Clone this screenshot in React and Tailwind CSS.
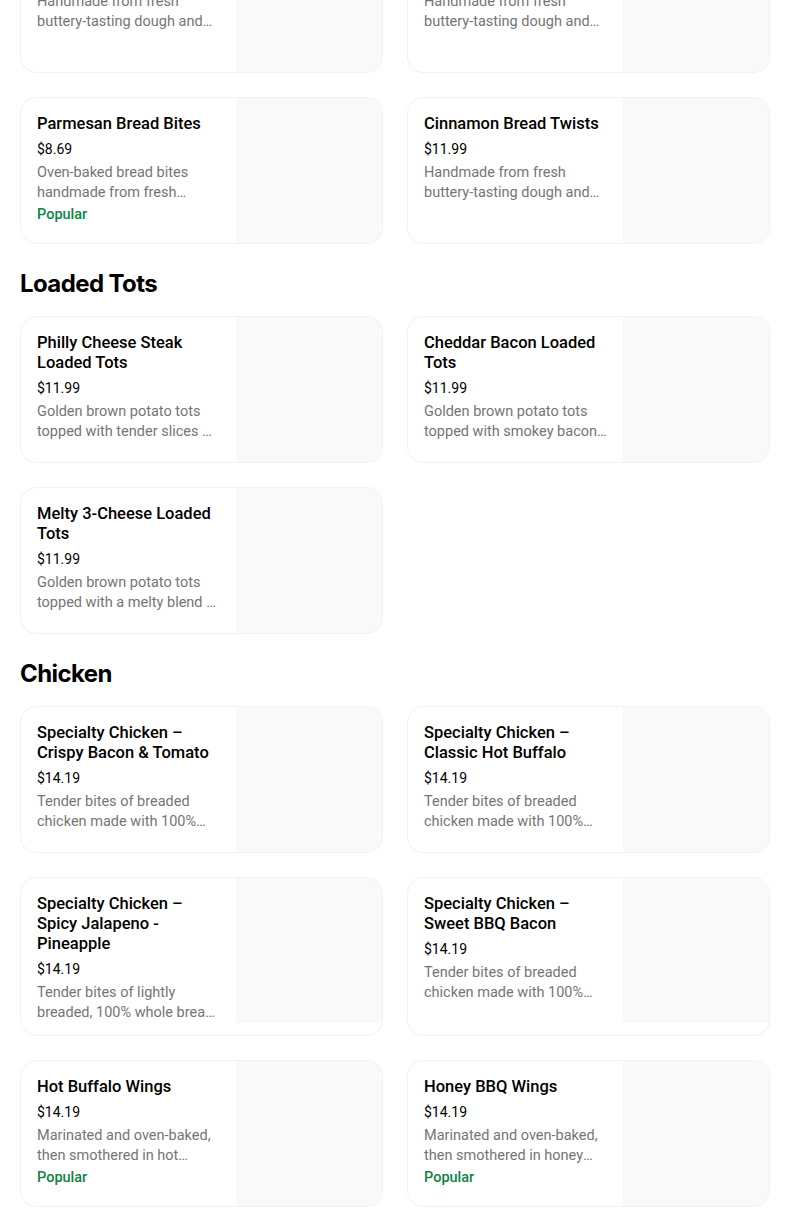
import React from 'react';

const sections = [
  {
    title: null,
    items: [
      { name: 'Garlic Bread Twists', price: '$11.99', desc: 'Handmade from fresh buttery-tasting dough and topped with garlic and herbs.' },
      { name: 'Italian Bread Twists', price: '$11.99', desc: 'Handmade from fresh buttery-tasting dough and topped with Italian seasoning.' },
      { name: 'Parmesan Bread Bites', price: '$8.69', desc: 'Oven-baked bread bites handmade from fresh buttery-tasting dough.', popular: true },
      { name: 'Cinnamon Bread Twists', price: '$11.99', desc: 'Handmade from fresh buttery-tasting dough and baked to a golden brown.' },
    ],
  },
  {
    title: 'Loaded Tots',
    items: [
      { name: 'Philly Cheese Steak Loaded Tots', price: '$11.99', desc: 'Golden brown potato tots topped with tender slices of steak, onions and peppers.' },
      { name: 'Cheddar Bacon Loaded Tots', price: '$11.99', desc: 'Golden brown potato tots topped with smokey bacon, cheddar and ranch.' },
      { name: 'Melty 3-Cheese Loaded Tots', price: '$11.99', desc: 'Golden brown potato tots topped with a melty blend of three cheeses.' },
    ],
  },
  {
    title: 'Chicken',
    items: [
      { name: 'Specialty Chicken – Crispy Bacon & Tomato', price: '$14.19', desc: 'Tender bites of breaded chicken made with 100% whole breast white meat.' },
      { name: 'Specialty Chicken – Classic Hot Buffalo', price: '$14.19', desc: 'Tender bites of breaded chicken made with 100% whole breast white meat.' },
      { name: 'Specialty Chicken – Spicy Jalapeno - Pineapple', price: '$14.19', desc: 'Tender bites of lightly breaded, 100% whole breast white meat chicken.' },
      { name: 'Specialty Chicken – Sweet BBQ Bacon', price: '$14.19', desc: 'Tender bites of breaded chicken made with 100% whole breast white meat.' },
      { name: 'Hot Buffalo Wings', price: '$14.19', desc: 'Marinated and oven-baked, then smothered in hot buffalo sauce.', popular: true },
      { name: 'Honey BBQ Wings', price: '$14.19', desc: 'Marinated and oven-baked, then smothered in honey BBQ sauce.', popular: true },
    ],
  },
];

function ItemCard({ item }) {
  return (
    <div className="flex overflow-hidden rounded-2xl border border-[#f1f1f1] bg-white">
      <div className="min-w-0 flex-1 px-4 pt-4 pb-3">
        <h3 className="text-[16.5px] font-medium leading-5 text-black">{item.name}</h3>
        <p className="mt-[5px] text-[14px] leading-5 text-black">{item.price}</p>
        <p className="mt-1 line-clamp-2 text-[14.5px] leading-5 text-[#757575]">{item.desc}</p>
        {item.popular && (
          <p className="mt-0.5 text-[14.5px] font-medium leading-5 text-[#0e8345]">Popular</p>
        )}
      </div>
      <div className="h-[145px] w-[146px] shrink-0 bg-[#f9f9f9]" />
    </div>
  );
}

export default function App() {
  return (
    <div className="h-[1218px] overflow-hidden bg-white" style={{ fontFamily: 'Roboto, "Noto Sans", sans-serif' }}>
      <div className="ml-5 -mt-[74px] w-[750px]">
        {sections.map((s, i) => (
          <section key={i}>
            {s.title && (
              <h2 className="mt-6 mb-4 font-['Inter',sans-serif] text-[24px] font-bold leading-8 tracking-tight text-black">{s.title}</h2>
            )}
            <div className="grid grid-cols-2 gap-6">
              {s.items.map(item => (
                <ItemCard key={item.name} item={item} />
              ))}
            </div>
          </section>
        ))}
      </div>
    </div>
  );
}
